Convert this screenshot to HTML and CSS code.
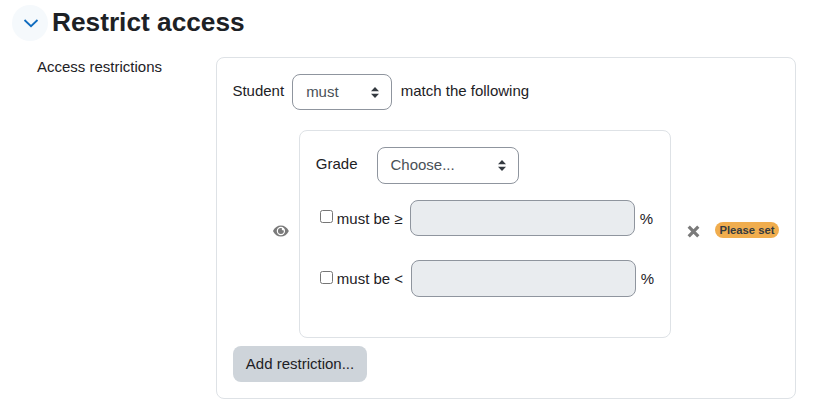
FILE: index.html
```html
<!DOCTYPE html>
<html lang="en">
<head>
<meta charset="utf-8">
<title>Restrict access</title>
<link rel="stylesheet" href="styles.css">
</head>
<body>
<div class="header">
  <span class="toggle"><svg width="16" height="16" viewBox="0 0 16 16"><path d="M1.500 5 8 11.200 14.500 5" fill="none" stroke="#0f6cbf" stroke-width="1.800"/></svg></span>
  <h3 class="title">Restrict access</h3>
</div>
<div class="form-row">
  <div class="form-label">Access restrictions</div>
  <div class="panel">
    <div class="top-row">
      <span class="top-text">Student</span>
      <span class="select select-must">must<svg class="updown" width="8" height="11" viewBox="0 0 8 11"><path d="M4 0 8 4.200H0zM4 11 0 6.800h8z"/></svg></span>
      <span class="top-text top-match">match the following</span>
    </div>
    <div class="condition">
      <svg class="eye" width="16" height="12" viewBox="0 0 16 12"><path fill-rule="evenodd" d="M8 .5C4.600.5 1.700 2.600.2 5.600a.9.9 0 0 0 0 .8c1.500 3 4.400 5.100 7.800 5.100s6.300-2.100 7.800-5.100a.9.9 0 0 0 0-.8C14.300 2.600 11.400.5 8 .5ZM8 10.200A4.200 4.200 0 1 1 8 1.800a4.200 4.200 0 0 1 0 8.400Z"/><path d="M8 3a3 3 0 1 0 3 3c0-.3 0-.5-.1-.8a1.300 1.300 0 0 1-1.800-1.800C8.700 3.100 8.400 3 8 3Z"/></svg>
      <div class="card">
        <div class="grade-row">
          <span class="grade-label">Grade</span>
          <span class="select select-choose">Choose...<svg class="updown" width="8" height="11" viewBox="0 0 8 11"><path d="M4 0 8 4.200H0zM4 11 0 6.800h8z"/></svg></span>
        </div>
        <div class="limit limit-min">
          <label class="check"><span class="box"></span><span class="limit-text">must be ≥</span></label>
          <span class="input"></span>
          <span class="limit-text">%</span>
        </div>
        <div class="limit limit-max">
          <label class="check"><span class="box"></span><span class="limit-text">must be &lt;</span></label>
          <span class="input"></span>
          <span class="limit-text">%</span>
        </div>
      </div>
      <svg class="cross" width="13" height="13" viewBox="0 0 13 13"><path d="M1.700 1.700 11.300 11.300M11.300 1.700 1.700 11.300" stroke="#7a7a7a" stroke-width="3.200" fill="none"/></svg>
      <span class="badge">Please set</span>
    </div>
    <button class="add" type="button">Add restriction...</button>
  </div>
</div>
</body>
</html>
```
FILE: styles.css
```css
* { box-sizing: border-box; }
html, body { margin: 0; padding: 0; }
body {
  width: 821px;
  height: 410px;
  overflow: hidden;
  background: #fff;
  color: #1d2125;
  font-family: "Liberation Sans", Arial, sans-serif;
  font-size: 15px;
  line-height: 22.5px;
}
.header {
  display: flex;
  align-items: center;
  gap: 4px;
  padding: 5px 0 0 12px;
  height: 41px;
}
.toggle {
  width: 36px;
  height: 36px;
  padding-left: 2px;
  border-radius: 50%;
  background: #f5f9fc;
  display: flex;
  align-items: center;
  justify-content: center;
}
.title {
  margin: -2px 0 0;
  font-size: 26.25px;
  font-weight: 700;
  line-height: 36px;
}
.form-row {
  display: flex;
  margin-top: 16px;
  padding-left: 37px;
}
.form-label {
  width: 179px;
  margin-top: -1px;
}
.panel {
  width: 580px;
  height: 342px;
  border: 1px solid #dee2e6;
  border-radius: 8px;
  padding: 16px;
}
.top-row {
  display: flex;
  align-items: center;
  gap: 8px;
  height: 36px;
  margin-left: -.6px;
}
.top-text { margin-top: -2px; }
.top-match { margin-left: .6px; }
.select {
  display: flex;
  align-items: center;
  justify-content: space-between;
  border: 1px solid #8f959e;
  border-radius: 8px;
  background: #fff;
  color: #495057;
  padding-left: 13px;
  padding-right: 12px;
}
.select-must { width: 100px; height: 36px; }
.select-choose { width: 142px; height: 37px; }
.updown { fill: #343a40; }
.condition {
  display: flex;
  align-items: center;
  margin-top: 20px;
  padding-left: 40px;
}
.eye { fill: #7a7a7a; margin-top: -6px; }
.card {
  width: 372px;
  height: 208px;
  margin-left: 10px;
  border: 1px solid #dee2e6;
  border-radius: 8px;
  padding: 16px;
}
.grade-row {
  display: flex;
  align-items: center;
  gap: 19px;
}
.grade-label { margin-top: -3px; }
.limit {
  display: flex;
  align-items: center;
  gap: 5px;
  margin-left: 4px;
}
.limit-min { margin-top: 16px; }
.limit-max { margin-top: 24px; }
.limit-min .check { width: 85px; }
.limit-max .input { height: 37px; }
.limit-text { margin-top: 2px; white-space: nowrap; }
.check {
  display: flex;
  align-items: center;
  width: 86px;
  flex-shrink: 0;
}
.box {
  width: 13px;
  height: 13px;
  flex-shrink: 0;
  margin-right: 4px;
  margin-top: -3px;
  border: 1px solid #767676;
  border-radius: 2.500px;
  background: #fff;
}
.input {
  width: 225px;
  height: 36px;
  flex-shrink: 0;
  border: 1px solid #8f959e;
  border-radius: 8px;
  background: #e9ecef;
}
.cross { margin-left: 16px; margin-top: -6px; flex-shrink: 0; }
.badge {
  margin-left: 15px;
  width: 65px;
  height: 16px;
  border-radius: 8px;
  background: #f0ad4e;
  color: #343a40;
  font-size: 11.250px;
  font-weight: 700;
  line-height: 16px;
  text-align: center;
  margin-top: -9px;
}
.add {
  display: block;
  width: 134px;
  height: 36px;
  margin-top: 8px;
  border: 0;
  border-radius: 8px;
  background: #ced4da;
  color: #1d2125;
  font: inherit;
  padding: 0;
}
```
